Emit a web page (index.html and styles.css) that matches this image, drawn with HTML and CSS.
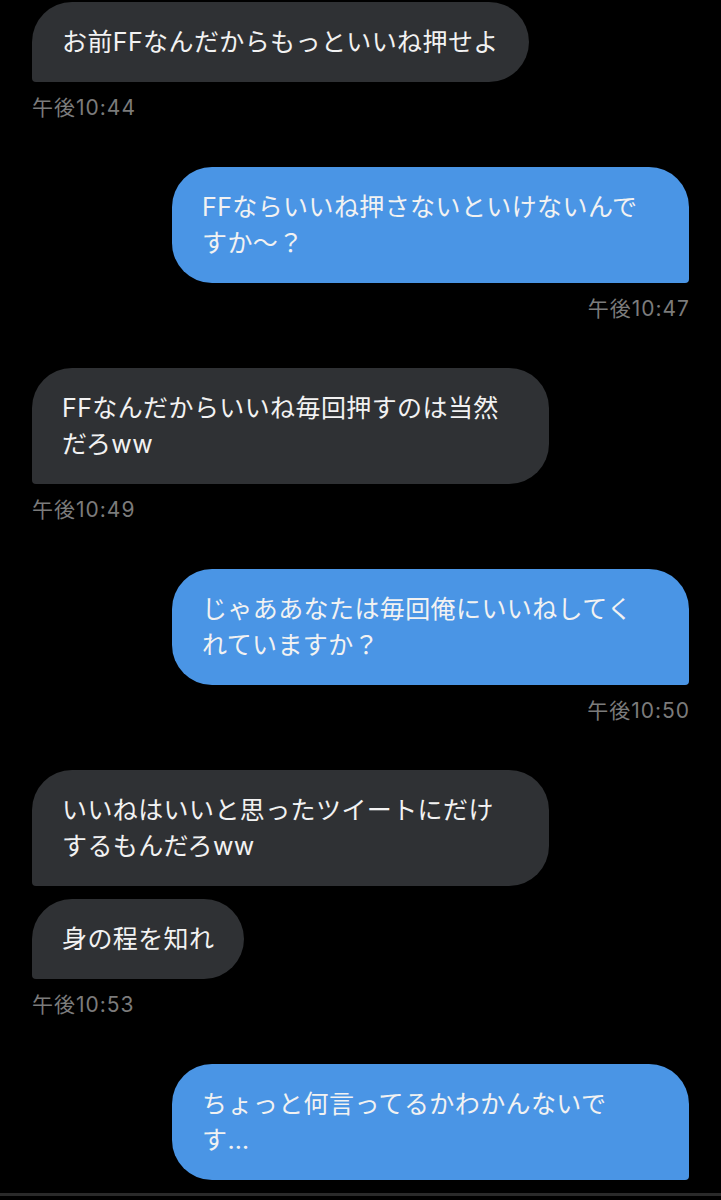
FILE: index.html
```html
<!DOCTYPE html>
<html lang="ja">
<head>
<meta charset="utf-8">
<link rel="stylesheet" href="styles.css">
</head>
<body>
<main class="chat">
  <section class="group in">
    <div class="bubble">お前FFなんだからもっといいね押せよ</div>
    <div class="time">午後10:44</div>
  </section>
  <section class="group out">
    <div class="bubble full">FFならいいね押さないといけないんで<br>すか～？</div>
    <div class="time">午後10:47</div>
  </section>
  <section class="group in">
    <div class="bubble full">FFなんだからいいね毎回押すのは当然<br>だろww</div>
    <div class="time">午後10:49</div>
  </section>
  <section class="group out">
    <div class="bubble full">じゃああなたは毎回俺にいいねしてく<br>れていますか？</div>
    <div class="time">午後10:50</div>
  </section>
  <section class="group in">
    <div class="bubble full">いいねはいいと思ったツイートにだけ<br>するもんだろww</div>
    <div class="bubble">身の程を知れ</div>
    <div class="time">午後10:53</div>
  </section>
  <section class="group out last">
    <div class="bubble full">ちょっと何言ってるかわかんないで<br>す…</div>
  </section>
</main>
<div class="bottom-bar"></div>
</body>
</html>
```
FILE: styles.css
```css
html, body {
  margin: 0;
  padding: 0;
  background: #000;
}
body {
  font-family: Inter, "Noto Sans CJK JP", "Noto Sans", sans-serif;
  color: #f2f2f2;
  height: 1200px;
  overflow: hidden;
}
.chat {
  display: flex;
  flex-direction: column;
  gap: 47px;
  padding: 2px 32px 0 32px;
}
.group {
  display: flex;
  flex-direction: column;
  gap: 13px;
}
.group.in { align-items: flex-start; }
.group.out { align-items: flex-end; }
.bubble {
  font-size: 25px;
  line-height: 36px;
  letter-spacing: 0.4px;
  padding: 22px 30px;
  border-radius: 40px;
  white-space: nowrap;
  box-sizing: border-box;
}
.bubble.full { width: 517px; }
.in .bubble {
  background: #2f3134;
  border-bottom-left-radius: 4px;
}
.out .bubble {
  background: #4a95e5;
  border-bottom-right-radius: 4px;
}
.time {
  font-size: 21px;
  line-height: 24px;
  letter-spacing: 1px;
  color: #7b7b7b;
  margin-top: 1px;
}
.out .time { margin-right: -1px; }
.bottom-bar {
  position: absolute;
  left: 0;
  right: 0;
  top: 1193px;
  height: 3px;
  background: #2a2a2a;
}
```
